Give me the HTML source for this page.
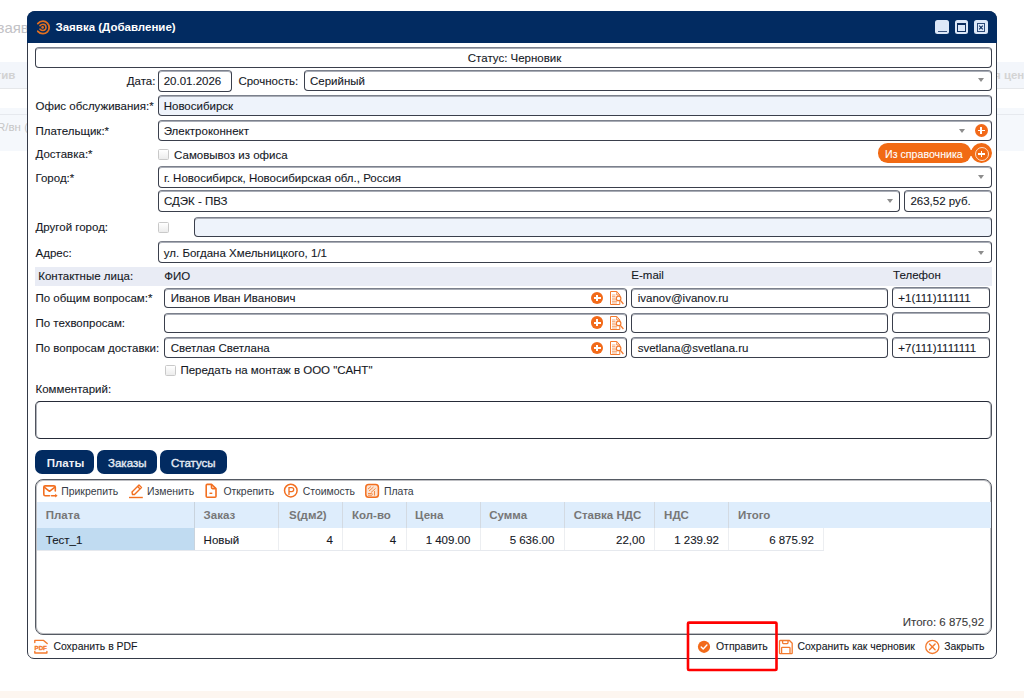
<!DOCTYPE html>
<html><head><meta charset="utf-8">
<style>
html,body{margin:0;padding:0;width:1024px;height:698px;overflow:hidden;background:#fff;font-family:"Liberation Sans",sans-serif;font-size:11.5px;color:#15191f;position:relative;-webkit-text-stroke:0.1px}
.a{position:absolute}
.t{position:absolute;line-height:13px;white-space:nowrap}
.inp{position:absolute;box-sizing:border-box;border:1px solid #3a3f4c;border-top-color:#7b808c;border-radius:4px;background:#fff;box-shadow:inset 0 1px 0 #a9adb6}
.ro{background:#eef3fb}
.arr{position:absolute;width:0;height:0;border-left:3.5px solid transparent;border-right:3.5px solid transparent;border-top:4px solid #8d8d8d}
.cb{position:absolute;box-sizing:border-box;width:11px;height:11px;border:1px solid #c9c9c9;border-radius:1.5px;background:linear-gradient(#fff,#ececec)}
.plus{position:absolute;width:13px;height:13px;border-radius:50%;background:#f26a1a}
.plus:before{content:"";position:absolute;left:3px;top:5.6px;width:6.8px;height:1.7px;background:#fff}
.plus:after{content:"";position:absolute;left:5.6px;top:3px;width:1.7px;height:6.8px;background:#fff}
.hdr{position:absolute;top:503.3px;height:25.5px;line-height:25.5px;font-weight:bold;color:#777;-webkit-text-stroke:0}
.sep{position:absolute;width:1px;background:#d7dde4}
.cell{position:absolute;top:529.7px;height:21.7px;line-height:21.7px}
.sm{font-size:10.45px}
.ns{-webkit-text-stroke:0}
</style></head><body>

<!-- background page -->
<div class="t" style="left:-2.5px;top:18.2px;font-size:15px;line-height:20px;color:#c2c2c6;-webkit-text-stroke:0">заяв</div>
<div class="a" style="left:0;top:62px;width:1024px;height:26px;background:#f3f6fb;border-bottom:1px solid #e5e7ea"></div>
<div class="t" style="left:-4.5px;top:69px;font-weight:bold;color:#d2d2d2;-webkit-text-stroke:0">тив</div>
<div class="t" style="left:994px;top:69px;font-weight:bold;color:#d4d4d4;-webkit-text-stroke:0">я цен</div>
<div class="a" style="left:0;top:108px;width:1024px;height:43px;background:#f5f8fc"></div>
<div class="a" style="left:0;top:113.5px;width:1024px;height:1px;background:#e6e9ee"></div>
<div class="t" style="left:-3px;top:120.5px;color:#c6c6c6;-webkit-text-stroke:0">R/вн (</div>
<div class="a" style="left:0;top:691px;width:1024px;height:7px;background:#fdf6f0"></div>

<!-- dialog -->
<div class="a" style="left:27px;top:11px;width:970px;height:648px;box-sizing:border-box;border:1.5px solid #343a48;border-radius:8px 8px 7px 7px;background:#fff"></div>
<div class="a" style="left:27px;top:11px;width:970px;height:31.5px;background:#022b61;border-radius:8px 8px 0 0"></div>
<svg class="a" style="left:35px;top:19px" width="17" height="17" viewBox="0 0 17 17">
 <path d="M2.8 4.6 Q4.8 2.2 8 2.2 A6 6 0 0 1 8 14.6 Q4.8 14.6 2.8 12.3" fill="none" stroke="#e4701f" stroke-width="1.8" stroke-linecap="round"/>
 <path d="M5 6.6 Q6.2 5.3 7.9 5.3 A3.1 3.1 0 0 1 7.9 11.5 Q6.2 11.5 5 10.2" fill="none" stroke="#e4701f" stroke-width="1.6" stroke-linecap="round"/>
 <circle cx="7.6" cy="8.4" r="1.3" fill="#e4701f"/>
</svg>
<div class="t ns" style="left:55.5px;top:20.5px;font-weight:bold;color:#fff">Заявка (Добавление)</div>
<!-- window buttons -->
<div class="a" style="left:935px;top:20.3px;width:13.7px;height:13.7px;background:#dde8f8;border-radius:2.5px"></div>
<div class="a" style="left:937.5px;top:31px;width:9px;height:1.3px;background:#3a5580"></div>
<div class="a" style="left:954.7px;top:20.3px;width:13.5px;height:13.7px;background:#dde8f8;border-radius:2.5px"></div>
<div class="a" style="left:957px;top:22.8px;width:9px;height:9px;box-sizing:border-box;border:1.3px solid #0e2f60;border-top-width:2.5px"></div>
<div class="a" style="left:974px;top:20.3px;width:13.5px;height:13.7px;background:#dde8f8;border-radius:2.5px"></div>
<div class="a" style="left:976.7px;top:22.8px;width:8.6px;height:9px;box-sizing:border-box;border:1.3px solid #2c4a78"></div>
<svg class="a" style="left:978px;top:24px" width="6" height="7" viewBox="0 0 6 7"><path d="M1.2 1.7 L4.8 5.3 M4.8 1.7 L1.2 5.3" stroke="#0e2f60" stroke-width="1.2"/></svg>

<!-- status -->
<div class="inp" style="left:35px;top:47px;width:957px;height:20.7px"></div>
<div class="t" style="left:467.8px;top:51.5px">Статус: Черновик</div>

<!-- date row -->
<div class="t" style="left:118px;top:75px;width:37.4px;text-align:right">Дата:</div>
<div class="inp" style="left:158px;top:70.2px;width:74.3px;height:21.5px"></div>
<div class="t" style="left:163.7px;top:75px">20.01.2026</div>
<div class="t" style="left:238.4px;top:75px">Срочность:</div>
<div class="inp" style="left:304.4px;top:69.7px;width:687.6px;height:21px"></div>
<div class="t" style="left:310px;top:74.7px">Серийный</div>
<div class="arr" style="left:978.3px;top:78.2px"></div>

<!-- office -->
<div class="t" style="left:35.5px;top:99.6px">Офис обслуживания:*</div>
<div class="inp ro" style="left:158px;top:95.1px;width:834px;height:21px"></div>
<div class="t" style="left:163.7px;top:99.6px">Новосибирск</div>

<!-- payer -->
<div class="t" style="left:35.5px;top:125px">Плательщик:*</div>
<div class="inp" style="left:158px;top:120.2px;width:834px;height:20.9px"></div>
<div class="t" style="left:163.7px;top:124.8px">Электроконнект</div>
<div class="arr" style="left:959px;top:128.6px"></div>
<div class="plus" style="left:974.9px;top:124.1px"></div>

<!-- delivery -->
<div class="t" style="left:35.5px;top:148.3px">Доставка:*</div>
<div class="cb" style="left:158px;top:149.3px"></div>
<div class="t" style="left:174.1px;top:148.5px">Самовывоз из офиса</div>
<div class="a" style="left:877.7px;top:143.4px;width:93.6px;height:19.3px;background:#f16a14;border-radius:9.7px"></div>
<div class="a" style="left:966px;top:149.8px;width:8px;height:6.2px;background:#f16a14"></div>
<div class="t" style="left:885.2px;top:148.2px;color:#fff;transform-origin:0 50%;transform:scaleX(0.925)">Из справочника</div>
<div class="a" style="left:970.9px;top:143px;width:21.2px;height:20.2px;background:#f16a14;border-radius:50%"></div>
<div class="a" style="left:974.7px;top:146.6px;width:14.2px;height:14.2px;box-sizing:border-box;border:1.1px solid #fde0cc;border-radius:50%"></div>
<div class="a" style="left:978.3px;top:153.2px;width:6.8px;height:1.5px;background:#fff"></div>
<div class="a" style="left:980.8px;top:150.7px;width:1.5px;height:6.8px;background:#fff"></div>

<!-- city -->
<div class="t" style="left:35.5px;top:171.5px">Город:*</div>
<div class="inp" style="left:158px;top:166.3px;width:834px;height:21.3px"></div>
<div class="t" style="left:163.9px;top:171.5px">г. Новосибирск, Новосибирская обл., Россия</div>
<div class="arr" style="left:978.3px;top:175.3px"></div>
<div class="inp" style="left:158px;top:190.4px;width:742.2px;height:21.8px"></div>
<div class="t" style="left:163.9px;top:195.2px">СДЭК - ПВЗ</div>
<div class="arr" style="left:886.5px;top:199.2px"></div>
<div class="inp" style="left:904.1px;top:190.4px;width:87.5px;height:21.8px"></div>
<div class="t" style="left:910.4px;top:195.2px">263,52 руб.</div>

<!-- other city -->
<div class="t" style="left:35.5px;top:220.6px">Другой город:</div>
<div class="cb" style="left:158px;top:221.6px"></div>
<div class="inp ro" style="left:194px;top:216.7px;width:798px;height:20.8px"></div>

<!-- address -->
<div class="t" style="left:35.5px;top:246.8px">Адрес:</div>
<div class="inp" style="left:158px;top:241.4px;width:834px;height:21.6px"></div>
<div class="t" style="left:163.8px;top:246.6px">ул. Богдана Хмельницкого, 1/1</div>
<div class="arr" style="left:978.3px;top:250.6px"></div>

<!-- contacts -->
<div class="a" style="left:35px;top:267.1px;width:957px;height:18.6px;background:#e9ecf5"></div>
<div class="t" style="left:38.2px;top:269.6px">Контактные лица:</div>
<div class="t" style="left:164.3px;top:269.6px">ФИО</div>
<div class="t" style="left:631.3px;top:268.6px">E-mail</div>
<div class="t" style="left:893.1px;top:268.6px">Телефон</div>

<div class="t" style="left:35.5px;top:291.6px">По общим вопросам:*</div>
<div class="inp" style="left:163.6px;top:287.6px;width:463.9px;height:20.6px"></div>
<div class="t" style="left:170.7px;top:291.6px">Иванов Иван Иванович</div>
<div class="plus" style="left:590.9px;top:291.5px;width:12.6px;height:12.6px"></div>
<div class="inp" style="left:631px;top:287.6px;width:256.8px;height:20.6px"></div>
<div class="t" style="left:637.7px;top:291.6px">ivanov@ivanov.ru</div>
<div class="inp" style="left:891.9px;top:287.4px;width:98.6px;height:21px"></div>
<div class="t" style="left:898.3px;top:291.6px">+1(111)111111</div>

<div class="t" style="left:35.5px;top:316.6px">По техвопросам:</div>
<div class="inp" style="left:163.6px;top:312.5px;width:463.9px;height:20.5px"></div>
<div class="plus" style="left:590.9px;top:316.3px;width:12.6px;height:12.6px"></div>
<div class="inp" style="left:631px;top:312.5px;width:256.8px;height:20.5px"></div>
<div class="inp" style="left:891.9px;top:312px;width:98.6px;height:21px"></div>

<div class="t" style="left:35.5px;top:342.2px">По вопросам доставки:</div>
<div class="inp" style="left:163.6px;top:337.4px;width:463.9px;height:21px"></div>
<div class="t" style="left:170.7px;top:341.6px">Светлая Светлана</div>
<div class="plus" style="left:590.9px;top:341.5px;width:12.6px;height:12.6px"></div>
<div class="inp" style="left:631px;top:337.4px;width:256.8px;height:21px"></div>
<div class="t" style="left:637.7px;top:341.6px">svetlana@svetlana.ru</div>
<div class="inp" style="left:891.9px;top:337px;width:98.6px;height:21px"></div>
<div class="t" style="left:898.3px;top:341.6px">+7(111)1111111</div>

<div class="cb" style="left:164.9px;top:365.4px"></div>
<div class="t" style="left:180.4px;top:364.4px">Передать на монтаж в ООО "САНТ"</div>
<div class="t" style="left:35.5px;top:383.4px">Комментарий:</div>
<div class="a" style="left:34.7px;top:401.2px;width:957.3px;height:37.6px;box-sizing:border-box;border:1px solid #262b38;border-left-color:#50545e;border-right-color:#50545e;box-shadow:inset 1px 0 0 #b0b3ba,inset -1px 0 0 #b0b3ba;border-radius:5px"></div>

<!-- tabs -->
<div class="a" style="left:35.4px;top:449.5px;width:59px;height:24.4px;background:#022b61;border-radius:7px"></div>
<div class="t" style="left:46.8px;top:456.6px;font-weight:bold;color:#eef0f5;-webkit-text-stroke:0">Платы</div>
<div class="a" style="left:97px;top:449.5px;width:60.2px;height:24.4px;background:#022b61;border-radius:7px"></div>
<div class="t" style="left:108px;top:456.6px;color:#e6ecf4;-webkit-text-stroke:0.35px #e6ecf4">Заказы</div>
<div class="a" style="left:160px;top:449.5px;width:66.6px;height:24.4px;background:#022b61;border-radius:7px"></div>
<div class="t" style="left:171px;top:456.6px;color:#e6ecf4;-webkit-text-stroke:0.35px #e6ecf4">Статусы</div>

<!-- grid panel -->
<div class="a" style="left:35.3px;top:478.5px;width:956.7px;height:156.5px;box-sizing:border-box;border:1px solid #555a63;box-shadow:inset 0 0 0 1px rgba(110,114,122,0.45);border-radius:8px"></div>
<!-- toolbar -->
<div class="t sm" style="left:61.2px;top:485px;color:#353b46;-webkit-text-stroke:0">Прикрепить</div>
<div class="t sm" style="left:147px;top:485px;color:#353b46;-webkit-text-stroke:0">Изменить</div>
<div class="t sm" style="left:223.4px;top:485px;color:#353b46;-webkit-text-stroke:0">Открепить</div>
<div class="t sm" style="left:302.7px;top:485px;color:#353b46;-webkit-text-stroke:0">Стоимость</div>
<div class="t sm" style="left:384px;top:485px;color:#353b46;-webkit-text-stroke:0">Плата</div>

<!-- grid header -->
<div class="a" style="left:36.5px;top:502.3px;width:954px;height:25.7px;background:#deedfc"></div>
<div class="hdr" style="left:45.8px">Плата</div>
<div class="hdr" style="left:203.6px">Заказ</div>
<div class="hdr" style="left:289.1px">S(дм2)</div>
<div class="hdr" style="left:352px">Кол-во</div>
<div class="hdr" style="left:415.1px">Цена</div>
<div class="hdr" style="left:489.3px">Сумма</div>
<div class="hdr" style="left:573.7px">Ставка НДС</div>
<div class="hdr" style="left:664.1px">НДС</div>
<div class="hdr" style="left:737.9px">Итого</div>
<!-- data row -->
<div class="a" style="left:36.5px;top:528px;width:157.8px;height:21.7px;background:#c0dbf1"></div>
<div class="a" style="left:36.5px;top:549.5px;width:787px;height:1px;background:#e6e9ee"></div>
<div class="sep" style="left:194px;top:502.3px;height:47.5px;background:#c9d3dd"></div>
<div class="sep" style="left:278px;top:502.3px;height:25.7px;background:#d3dae2"></div><div class="sep" style="left:278px;top:528px;height:21.7px;background:#eceef1"></div>
<div class="sep" style="left:342px;top:502.3px;height:25.7px;background:#d3dae2"></div><div class="sep" style="left:342px;top:528px;height:21.7px;background:#eceef1"></div>
<div class="sep" style="left:405.5px;top:502.3px;height:25.7px;background:#d3dae2"></div><div class="sep" style="left:405.5px;top:528px;height:21.7px;background:#eceef1"></div>
<div class="sep" style="left:479.5px;top:502.3px;height:25.7px;background:#d3dae2"></div><div class="sep" style="left:479.5px;top:528px;height:21.7px;background:#eceef1"></div>
<div class="sep" style="left:564px;top:502.3px;height:25.7px;background:#d3dae2"></div><div class="sep" style="left:564px;top:528px;height:21.7px;background:#eceef1"></div>
<div class="sep" style="left:654.3px;top:502.3px;height:25.7px;background:#d3dae2"></div><div class="sep" style="left:654.3px;top:528px;height:21.7px;background:#eceef1"></div>
<div class="sep" style="left:728px;top:502.3px;height:25.7px;background:#d3dae2"></div><div class="sep" style="left:728px;top:528px;height:21.7px;background:#eceef1"></div>
<div class="sep" style="left:823px;top:528px;height:21.7px;background:#eceef1"></div>
<div class="cell" style="left:45.8px">Тест_1</div>
<div class="cell" style="left:203.6px">Новый</div>
<div class="cell" style="left:250px;width:83px;text-align:right">4</div>
<div class="cell" style="left:300px;width:96.2px;text-align:right">4</div>
<div class="cell" style="left:380px;width:90.4px;text-align:right">1 409.00</div>
<div class="cell" style="left:460px;width:94.4px;text-align:right">5 636.00</div>
<div class="cell" style="left:560px;width:84.8px;text-align:right">22,00</div>
<div class="cell" style="left:640px;width:79px;text-align:right">1 239.92</div>
<div class="cell" style="left:720px;width:93.9px;text-align:right">6 875.92</div>

<div class="t" style="left:800px;top:616.1px;width:184.1px;text-align:right;color:#3a3a3a">Итого: 6 875,92</div>

<!-- footer -->
<div class="t sm" style="left:53.4px;top:640px">Сохранить в PDF</div>
<div class="t sm" style="left:716px;top:640px">Отправить</div>
<div class="t sm" style="left:797.4px;top:640px">Сохранить как черновик</div>
<div class="t sm" style="left:944.2px;top:640px">Закрыть</div>


<!-- doc-search icons -->
<svg class="a" style="left:609px;top:290px" width="16" height="16" viewBox="0 0 16 16"><g fill="none" stroke="#f37a2e" stroke-width="1"><path d="M1.5 1.5H7.8L10.8 5V14.5H1.5Z"/><path d="M7.8 1.5V5H10.8" stroke-width="0.9"/><path d="M3 5H6.5M3 6.6H6.5M3 8.2H6.5M3 9.8H7M3 11.4H8M3 13H8" stroke-width="0.9" opacity="0.7"/><circle cx="9.6" cy="8.4" r="2.3" fill="#fff" stroke-width="1.2"/><path d="M11.2 10.2L14.4 14" stroke-width="1.3"/></g></svg>
<svg class="a" style="left:609px;top:315px" width="16" height="16" viewBox="0 0 16 16"><g fill="none" stroke="#f37a2e" stroke-width="1"><path d="M1.5 1.5H7.8L10.8 5V14.5H1.5Z"/><path d="M7.8 1.5V5H10.8" stroke-width="0.9"/><path d="M3 5H6.5M3 6.6H6.5M3 8.2H6.5M3 9.8H7M3 11.4H8M3 13H8" stroke-width="0.9" opacity="0.7"/><circle cx="9.6" cy="8.4" r="2.3" fill="#fff" stroke-width="1.2"/><path d="M11.2 10.2L14.4 14" stroke-width="1.3"/></g></svg>
<svg class="a" style="left:609px;top:340px" width="16" height="16" viewBox="0 0 16 16"><g fill="none" stroke="#f37a2e" stroke-width="1"><path d="M1.5 1.5H7.8L10.8 5V14.5H1.5Z"/><path d="M7.8 1.5V5H10.8" stroke-width="0.9"/><path d="M3 5H6.5M3 6.6H6.5M3 8.2H6.5M3 9.8H7M3 11.4H8M3 13H8" stroke-width="0.9" opacity="0.7"/><circle cx="9.6" cy="8.4" r="2.3" fill="#fff" stroke-width="1.2"/><path d="M11.2 10.2L14.4 14" stroke-width="1.3"/></g></svg>

<!-- toolbar icons -->
<svg class="a" style="left:42px;top:484px" width="16" height="14" viewBox="0 0 16 14"><g fill="none" stroke="#f26f20" stroke-width="1.6" stroke-linecap="round" stroke-linejoin="round"><path d="M7.5 11.7H3.2Q1.8 11.7 1.8 10.3V3.3Q1.8 1.9 3.2 1.9H11.8Q13.3 1.9 13.3 3.3V7"/><path d="M2.2 3.2L7.5 7.3L12.9 3.2"/><path d="M9.5 11.7H13.5"/></g><path d="M13.2 9.8L15.6 11.7L13.2 13.6Z" fill="#f26f20"/></svg>
<svg class="a" style="left:127px;top:483px" width="17" height="16" viewBox="0 0 17 16"><g fill="none" stroke="#f26f20" stroke-width="1.4" stroke-linejoin="round"><path d="M5.5 11.5L5 9L12 2L14.5 4.5L7.5 11.5Z"/><path d="M10.6 3.4L13.1 5.9"/></g><path d="M2 14.5H15.8" stroke="#f26f20" stroke-width="1.4"/></svg>
<svg class="a" style="left:204px;top:483px" width="14" height="16" viewBox="0 0 14 16"><g fill="none" stroke="#f26f20" stroke-width="1.6" stroke-linejoin="round"><path d="M2.2 2.5Q2.2 1.4 3.3 1.4H7.5L12 5.7V13.3Q12 14.3 11 14.3H3.3Q2.2 14.3 2.2 13.3Z"/><path d="M7.5 1.6V4.6Q7.5 5.6 8.5 5.6H11.8"/><path d="M5.5 10.3H8.3" stroke-width="1.4"/></g></svg>
<svg class="a" style="left:283px;top:483px" width="16" height="16" viewBox="0 0 16 16"><g fill="none" stroke="#f26f20"><circle cx="7.8" cy="7.6" r="6.3" stroke-width="1.5"/><path d="M6 12V4.6H8.8Q10.7 4.6 10.7 6.6Q10.7 8.6 8.8 8.6H6" stroke-width="1.3"/></g></svg>
<svg class="a" style="left:364px;top:483px" width="16" height="16" viewBox="0 0 16 16"><rect x="1.8" y="1.6" width="12.6" height="12.6" rx="2.8" fill="#fbe3d3" stroke="#f26f20" stroke-width="1.5"/><g fill="none" stroke="#f58a45" stroke-width="1"><path d="M4 6L7 3.5M5 8L9.5 4M7 9.5L11.5 5.5M4 10.5H7.5L9 11.5M10.5 8V12.5M4 12.2H8"/></g></svg>

<!-- footer icons -->
<svg class="a" style="left:33px;top:639px" width="17" height="16" viewBox="0 0 17 16"><g fill="none" stroke="#f37a2e" stroke-width="1.4" stroke-linecap="round" stroke-linejoin="round"><path d="M1.8 3.5V1.4H10.6L14.2 4.6"/><path d="M1.8 12.4V14H13.9V12.4"/></g><text x="7.7" y="10.8" font-family="Liberation Sans" font-weight="bold" font-size="6.2" text-anchor="middle" fill="#f37a2e" stroke="#f37a2e" stroke-width="0.35" style="-webkit-text-stroke:0.35px #f37a2e">PDF</text></svg>
<svg class="a" style="left:697px;top:640px" width="14" height="14" viewBox="0 0 14 14"><circle cx="7" cy="6.8" r="6.1" fill="#f26a1a"/><path d="M4.2 7L6.2 9L9.9 5.1" fill="none" stroke="#fff" stroke-width="1.4" stroke-linecap="round" stroke-linejoin="round"/></svg>
<svg class="a" style="left:778px;top:639px" width="16" height="16" viewBox="0 0 16 16"><g fill="none" stroke="#f37a2e" stroke-width="1.3" stroke-linejoin="round"><path d="M1.5 2.2Q1.5 1.5 2.2 1.5H11.5L14.2 4.2V14Q14.2 14.6 13.6 14.6H2.1Q1.5 14.6 1.5 14Z"/><path d="M4.6 1.6V3.8Q4.6 4.6 5.4 4.6H9.2Q10 4.6 10 3.8V1.6"/><path d="M3.6 14.4V9.1Q3.6 8.3 4.4 8.3H11.2Q12 8.3 12 9.1V14.4"/></g></svg>
<svg class="a" style="left:924px;top:639px" width="16" height="16" viewBox="0 0 16 16"><g fill="none" stroke="#f37a2e"><circle cx="8.3" cy="7.9" r="6.6" stroke-width="1.3"/><path d="M5.5 5.1L11.1 10.7M11.1 5.1L5.5 10.7" stroke-width="1.4" stroke-linecap="round"/></g></svg>

<!-- red highlight -->
<svg class="a" style="left:680px;top:615px" width="105" height="63" viewBox="0 0 105 63"><rect x="8" y="7.6" width="88.5" height="47.4" rx="1" fill="none" stroke="#ff0000" stroke-width="2.6"/></svg>

</body></html>
